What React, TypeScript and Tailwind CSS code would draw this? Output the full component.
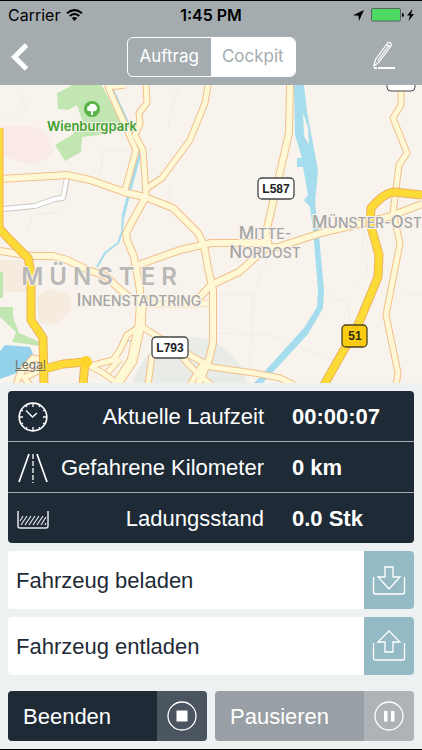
import type { ReactNode } from "react";

const mainRoads = [
  "M0 179L67 175L90 180L127 193L145 197L173 208L198 233L204 245L208 268L213 290L213 343L209 360L198 385",
  "M145 198L126 233L127 240L134 257L140 290L142 327",
  "M290 85L289 133L266 233L269 246",
  "M422 204L388 217L321 233L278 247L266 248L239 272L211 285L200 297L193 302",
  "M138 265L180 250L211 243L266 243",
  "M0 251L32 256L53 256L67 260L88 270L106 276L116 286L130 298",
];

const sideRoads = [
  "M126 85L108 87L136 150L125 190",
  "M146 85L147 103L139 113L140 124L135 135L143 150L146 195",
  "M208 85L205 103L190 140L162 178L146 189",
  "M401 85L401 105L393 118L407 153L399 165L393 213L400 243L386 315L398 373L396 385",
  "M141 326L127 335L120 350L113 360L90 366L103 373L120 385",
  "M108 372L120 359",
  "M142 327L160 338L211 367L254 373L280 378L294 385",
  "M152 355L148 385",
  "M182 357L193 369L211 385",
  "M190 385L204 362",
  "M16 385L20 373L33 358L44 360",
  "M20 373L30 385",
  "M44 368L24 378",
];

const trunkRoad = "M142 295L140 325L132 361L116 385";

const highways = [
  "M-1 128L-1 228L8 238L28 258L31 272L31 320L43 338L44 385",
  "M44 369L63 364L85 362L83 385",
  "M422 195L394 192Q384 193 371 208L370 223L379 255L378 277L358 325L324 385",
];

const shields = [
  { text: "L587", x: 258, y: 178, w: 36 },
  { text: "L793", x: 152, y: 337, w: 36 },
];

// one entry per word part: big initial, small rest
const districts = [
  { x: 139, y: 306, anchor: "middle", parts: [["I", "nnenstadtring"]] },
  { x: 265, y: 239, anchor: "middle", parts: [["M", "itte-"]] },
  { x: 265, y: 258, anchor: "middle", parts: [["N", "ordost"]] },
  { x: 312, y: 228, anchor: "start", parts: [["M", "ünster-"], ["O", "st"]] },
] as const;

function CityMap() {
  return (
    <svg
      viewBox="0 85 422 298"
      preserveAspectRatio="xMidYMid slice"
      className="block h-[298px] w-full bg-[#f8f4ed]"
      role="img"
      aria-label="Karte Münster"
    >
      <g fill="none" stroke="#f1ede5">
        <path d="M20 85L26 110L0 121M178 85L168 128M100 180L103 151L132 150M170 185V220M28 233L32 215L60 212M211 295L252 294L252 320M255 295L248 383M211 333L268 335L340 363M252 300L266 262M322 292L348 303L350 322M355 288L368 268L362 250L364 230M390 292L422 296" />
      </g>
      <path fill="#faeae7" d="M0 126L33 126L45 132L54 151L45 160L31 165L0 155Z" />
      <path fill="#f5ecdf" d="M0 260H20L31 265V292H0ZM37 297L50 289L61 293H70L72 309L56 325L39 323Z" />
      <path
        fill="#c2e6b1"
        d="M57 93L71 86V84H101L124 128L100 135L82 137L81 152L65 161L55 145L72 135L83 123L77 105L68 110L58 109ZM0 272H3V298H0ZM0 307H13V317L19 333L40 342V346L12 342L16 332L0 317Z"
      />
      <path fill="#94d2ec" d="M0 351L5 345L30 347L33 354L22 371L0 379Z" />
      <circle cx="190" cy="395" r="58" fill="#e9ebe6" />
      <path
        fill="#a5dcee"
        d="M294 85H304L307 112L318 170L315 203L319 235L324 290L323 308L308 334L263 383H254L304 328L317 307L318 290L313 230L310 207L304 200L308 195L303 167H297V158H302L295 135Z"
      />
      <path fill="#f8f4ed" d="M303 113L308 127L309 145L304 136Z" />
      <path
        fill="none"
        stroke="#a5dcee"
        strokeWidth="3"
        d="M112 89L137 143L139 157L128 197L123 217"
      />
      <path fill="none" stroke="#a5dcee" strokeWidth="2" d="M123 216L122 232L118 243L105 253L97 267" />
      <g fill="none" strokeLinejoin="round">
        <path stroke="#c9c7c4" strokeWidth="6" d="M67 179L63 198L55 199L35 206L3 209M125 339L135 337" />
        <path stroke="#fff" strokeWidth="4" d="M67 177L63 198L55 199L35 206L3 209M125 339L135 337" />
        <path stroke="#f7dcb5" strokeWidth="7" d="M143 304L193 304L211 303" />
        <path stroke="#fdf8dd" strokeWidth="5" d="M143 304L193 304L211 303" />
        <path stroke="#f0c08e" strokeWidth="11" d={trunkRoad} />
        {sideRoads.map((d) => (
          <path key={d} d={d} stroke="#f0c08e" strokeWidth="7" />
        ))}
        {mainRoads.map((d) => (
          <path key={d} d={d} stroke="#f0c08e" strokeWidth="8" />
        ))}
        {sideRoads.map((d) => (
          <path key={d} d={d} stroke="#fef8d4" strokeWidth="5" />
        ))}
        {mainRoads.map((d) => (
          <path key={d} d={d} stroke="#fef8d4" strokeWidth="6" />
        ))}
        <path stroke="#fef8d4" strokeWidth="9" d={trunkRoad} />
        {highways.map((d) => (
          <path key={d} d={d} stroke="#eeb25c" strokeWidth="9" />
        ))}
        {highways.map((d) => (
          <path key={d} d={d} stroke="#fddb36" strokeWidth="7" />
        ))}
      </g>
      <circle cx="86" cy="362" r="6" fill="#fdd32c" />

      <circle cx="92" cy="109" r="8" fill="#58b345" />
      <path
        fill="#fff"
        d="M91 115V111Q87 112 87 109Q87 106 89 106Q90 103 93 104Q96 104 96 106Q98 107 97 109Q96 112 93 111V115Z"
      />

      <g
        className="[font-family:Inter,'Liberation_Sans',sans-serif]"
        paintOrder="stroke"
        stroke="#f8f4ed"
        strokeLinejoin="round"
        strokeWidth="2"
        fill="#a5a5a4"
        textAnchor="middle"
      >
        <text x="92" y="131" fill="#439f30" className="text-[13px] font-semibold">Wienburgpark</text>
        <text x="102" y="285" fill="#b9b8b6" className="text-[24px] font-semibold tracking-[0.25em]">MÜNSTER</text>
        {districts.map((t) => (
          <text key={t.y} x={t.x} y={t.y} textAnchor={t.anchor} className="text-[17px] font-medium uppercase">
            {t.parts.map(([initial, rest]) => (
              <tspan key={initial}>
                {initial}
                <tspan className="text-[14px]">{rest}</tspan>
              </tspan>
            ))}
          </text>
        ))}
      </g>

      <g className="[font-family:'Liberation_Sans',sans-serif] text-[12px] font-bold" textAnchor="middle">
        <rect x="387" y="70" width="28" height="21" rx="4" fill="#fff" stroke="#454545" />
        {shields.map((s) => (
          <g key={s.text}>
            <rect x={s.x} y={s.y} width={s.w} height="21" rx="4" fill="#fff" stroke="#454545" strokeWidth="1.3" />
            <text x={s.x + s.w / 2} y={s.y + 15} fill="#222">{s.text}</text>
          </g>
        ))}
        <rect x="342" y="325" width="25" height="22" rx="4" fill="#fbcb12" stroke="#4c431c" strokeWidth="1.3" />
        <text x="355" y="340" fill="#30290f">51</text>
      </g>
    </svg>
  );
}

function StatusBar() {
  return (
    <div className="grid h-7 grid-cols-[1fr_auto_1fr] items-center px-2 text-[16px] leading-5 text-black">
      <div className="flex items-center gap-1.5">
        <span>Carrier</span>
        <svg width="17" height="12" viewBox="0 0 17 12" fill="none" stroke="#000" strokeWidth="2">
          <path d="M1 4.2Q8.500 -2 16 4.200M3.700 7Q8.500 3 13.300 7" />
          <path d="M5.700 9Q8.500 6.800 11.300 9L8.500 12Z" fill="#000" stroke="none" />
        </svg>
      </div>
      <span className="font-semibold">1:45 PM</span>
      <div className="flex items-center justify-end">
        <svg width="61" height="14" viewBox="0 0 61 14">
          <path d="M11 2L0 7.200L5.500 7.700L6 13Z" />
          <rect x="18.500" y=".5" width="29" height="12.500" rx="1.500" fill="#4cd964" stroke="#57675b" />
          <path d="M49 5Q51 5 51 7Q51 9 49 9Z" />
          <path d="M59.500 1L54 7.500H57L55.500 13L61 6H58Z" />
        </svg>
      </div>
    </div>
  );
}

function Header() {
  return (
    <header className="flex h-[84px] flex-col bg-[#a4acb0] [font-family:Inter,'Liberation_Sans',sans-serif]">
      <StatusBar />
      <nav className="grid flex-1 grid-cols-[1fr_auto_1fr] items-center px-2">
        <button type="button" aria-label="Zurück" className="h-10 w-10">
          <svg width="24" height="28" viewBox="0 0 24 28" fill="none" stroke="#fff" strokeWidth="5">
            <path d="M18.500 2L6.500 14L18.500 26" />
          </svg>
        </button>
        <div className="flex h-10 w-[169px] overflow-hidden rounded-md border border-white text-[17px]">
          <button type="button" className="flex-1 text-white">Auftrag</button>
          <button type="button" aria-pressed="true" className="flex-1 bg-white text-[#a4acb0]">Cockpit</button>
        </div>
        <button type="button" aria-label="Bearbeiten" className="mr-3 justify-self-end">
          <svg width="36" height="34" viewBox="0 0 36 34" fill="none" stroke="#fff" strokeWidth="1.200">
            <path d="M8 25L9.500 19.500L22 2.500Q25 2 25.500 5L13 22L8 26ZM11.500 21L23 5M20.500 4.500L24 7" />
            <path d="M12 28H29M8 28H11" strokeWidth="2" />
          </svg>
        </button>
      </nav>
    </header>
  );
}

const clockIcon = (
  <svg width="32" height="32" viewBox="0 0 32 32" fill="none" stroke="#fff">
    <circle cx="16" cy="16" r="13.800" strokeWidth="1.700" />
    <path strokeWidth="1.300" d="M9 9.500L15.500 16L20 12M16 2V6M16 26V30M2 16H6M26 16H30M9 4L10 6M23 4L22 6M4 9L6 10M28 9L26 10M4 23L6 22M28 23L26 22M9 28L10 26M23 28L22 26" />
  </svg>
);

const roadIcon = (
  <svg width="32" height="32" viewBox="0 0 32 32" fill="none" stroke="#fff" strokeWidth="1.700">
    <path d="M12 2L2 30M20 2L30 30" />
    <path d="M16 2V31" strokeDasharray="5 2" strokeWidth="1.300" />
  </svg>
);

const loadIcon = (
  <svg width="32" height="32" viewBox="0 0 32 32" fill="none" stroke="#e9e8ec" strokeWidth="1.500">
    <path d="M1 8V23Q1 25 3 25H29Q31 25 31 23V8" />
    <path strokeWidth="1.200" d="M3 18L6 13M4 22L10 13M8 22L14 13M12 22L18 13M16 22L22 13M20 22L26 13M24 22L29 14M28 22L29 20" />
  </svg>
);

const stats = [
  { label: "Aktuelle Laufzeit", value: "00:00:07", icon: clockIcon },
  { label: "Gefahrene Kilometer", value: "0 km", icon: roadIcon },
  { label: "Ladungsstand", value: "0.0 Stk", icon: loadIcon },
];

function Stats() {
  return (
    <dl className="divide-y divide-[#a4acb0] overflow-hidden rounded-sm bg-[#1e2b37] text-[22px] leading-7 text-white">
      {stats.map((s) => (
        <div key={s.label} className="flex h-[51px] items-center pt-0.5 pl-[9px] last:h-[50px]">
          {s.icon}
          <dt className="flex-1 text-right whitespace-nowrap">{s.label}</dt>
          <dd className="ml-7 w-[122px] font-bold">{s.value}</dd>
        </div>
      ))}
    </dl>
  );
}

function TrayIcon({ arrow }: { arrow: string }) {
  return (
    <svg width="34" height="34" viewBox="0 0 34 34" fill="none" stroke="#fff" strokeWidth="1.300">
      <path d="M1.500 13V28Q1.500 30 3.500 30H30.500Q32.500 30 32.500 28V13" />
      <path d={arrow} />
    </svg>
  );
}

function LoadButton({ label, arrow }: { label: string; arrow: string }) {
  return (
    <button type="button" className="flex h-[58px] w-full overflow-hidden rounded-sm bg-white text-left">
      <span className="flex-1 self-center pt-0.5 pl-2">{label}</span>
      <span className="flex w-[50px] items-center justify-center self-stretch bg-[#94bac5] pt-0.5">
        <TrayIcon arrow={arrow} />
      </span>
    </button>
  );
}

function ActionButton({ label, className, children }: { label: string; className: string; children: ReactNode }) {
  return (
    <button
      type="button"
      className={`flex h-[50px] flex-1 overflow-hidden rounded-sm text-left text-white ${className}`}
    >
      <span className="flex-1 self-center pt-0.5 pl-[15px]">{label}</span>
      <span className="flex w-[50px] items-center justify-center self-stretch bg-white/20">
        <svg width="30" height="30" viewBox="0 0 30 30" fill="#fff">
          <circle cx="15" cy="15" r="14" fill="none" stroke="#fff" strokeWidth="1.300" />
          {children}
        </svg>
      </span>
    </button>
  );
}

export default function App() {
  return (
    <div className="min-h-screen border-y border-black bg-[#edf1f2] [font-family:'Liberation_Sans',Arial,sans-serif]">
      <Header />
      <div className="relative">
        <CityMap />
        <a
          href="#legal"
          className="absolute bottom-2.5 left-[15px] text-[12px] leading-4 text-[#6f6f6a] underline [font-family:Inter,sans-serif]"
        >
          Legal
        </a>
      </div>
      <main className="flex flex-col gap-2 p-2 text-[22px] leading-7 text-[#1e2b37]">
        <Stats />
        <LoadButton label="Fahrzeug beladen" arrow="M13 3H21V13H28L17 25L6 13H13Z" />
        <LoadButton label="Fahrzeug entladen" arrow="M13 22H21V12H28L17 1L6 12H13Z" />
        <div className="flex gap-2 pt-2">
          <ActionButton label="Beenden" className="bg-[#1e2b37]">
            <path d="M9.500 9.500H20.500V20.500H9.500Z" />
          </ActionButton>
          <ActionButton label="Pausieren" className="bg-[#99a0a5]">
            <path d="M10 10H13.500V20.500H10ZM17 10H20.500V20.500H17Z" />
          </ActionButton>
        </div>
      </main>
    </div>
  );
}
